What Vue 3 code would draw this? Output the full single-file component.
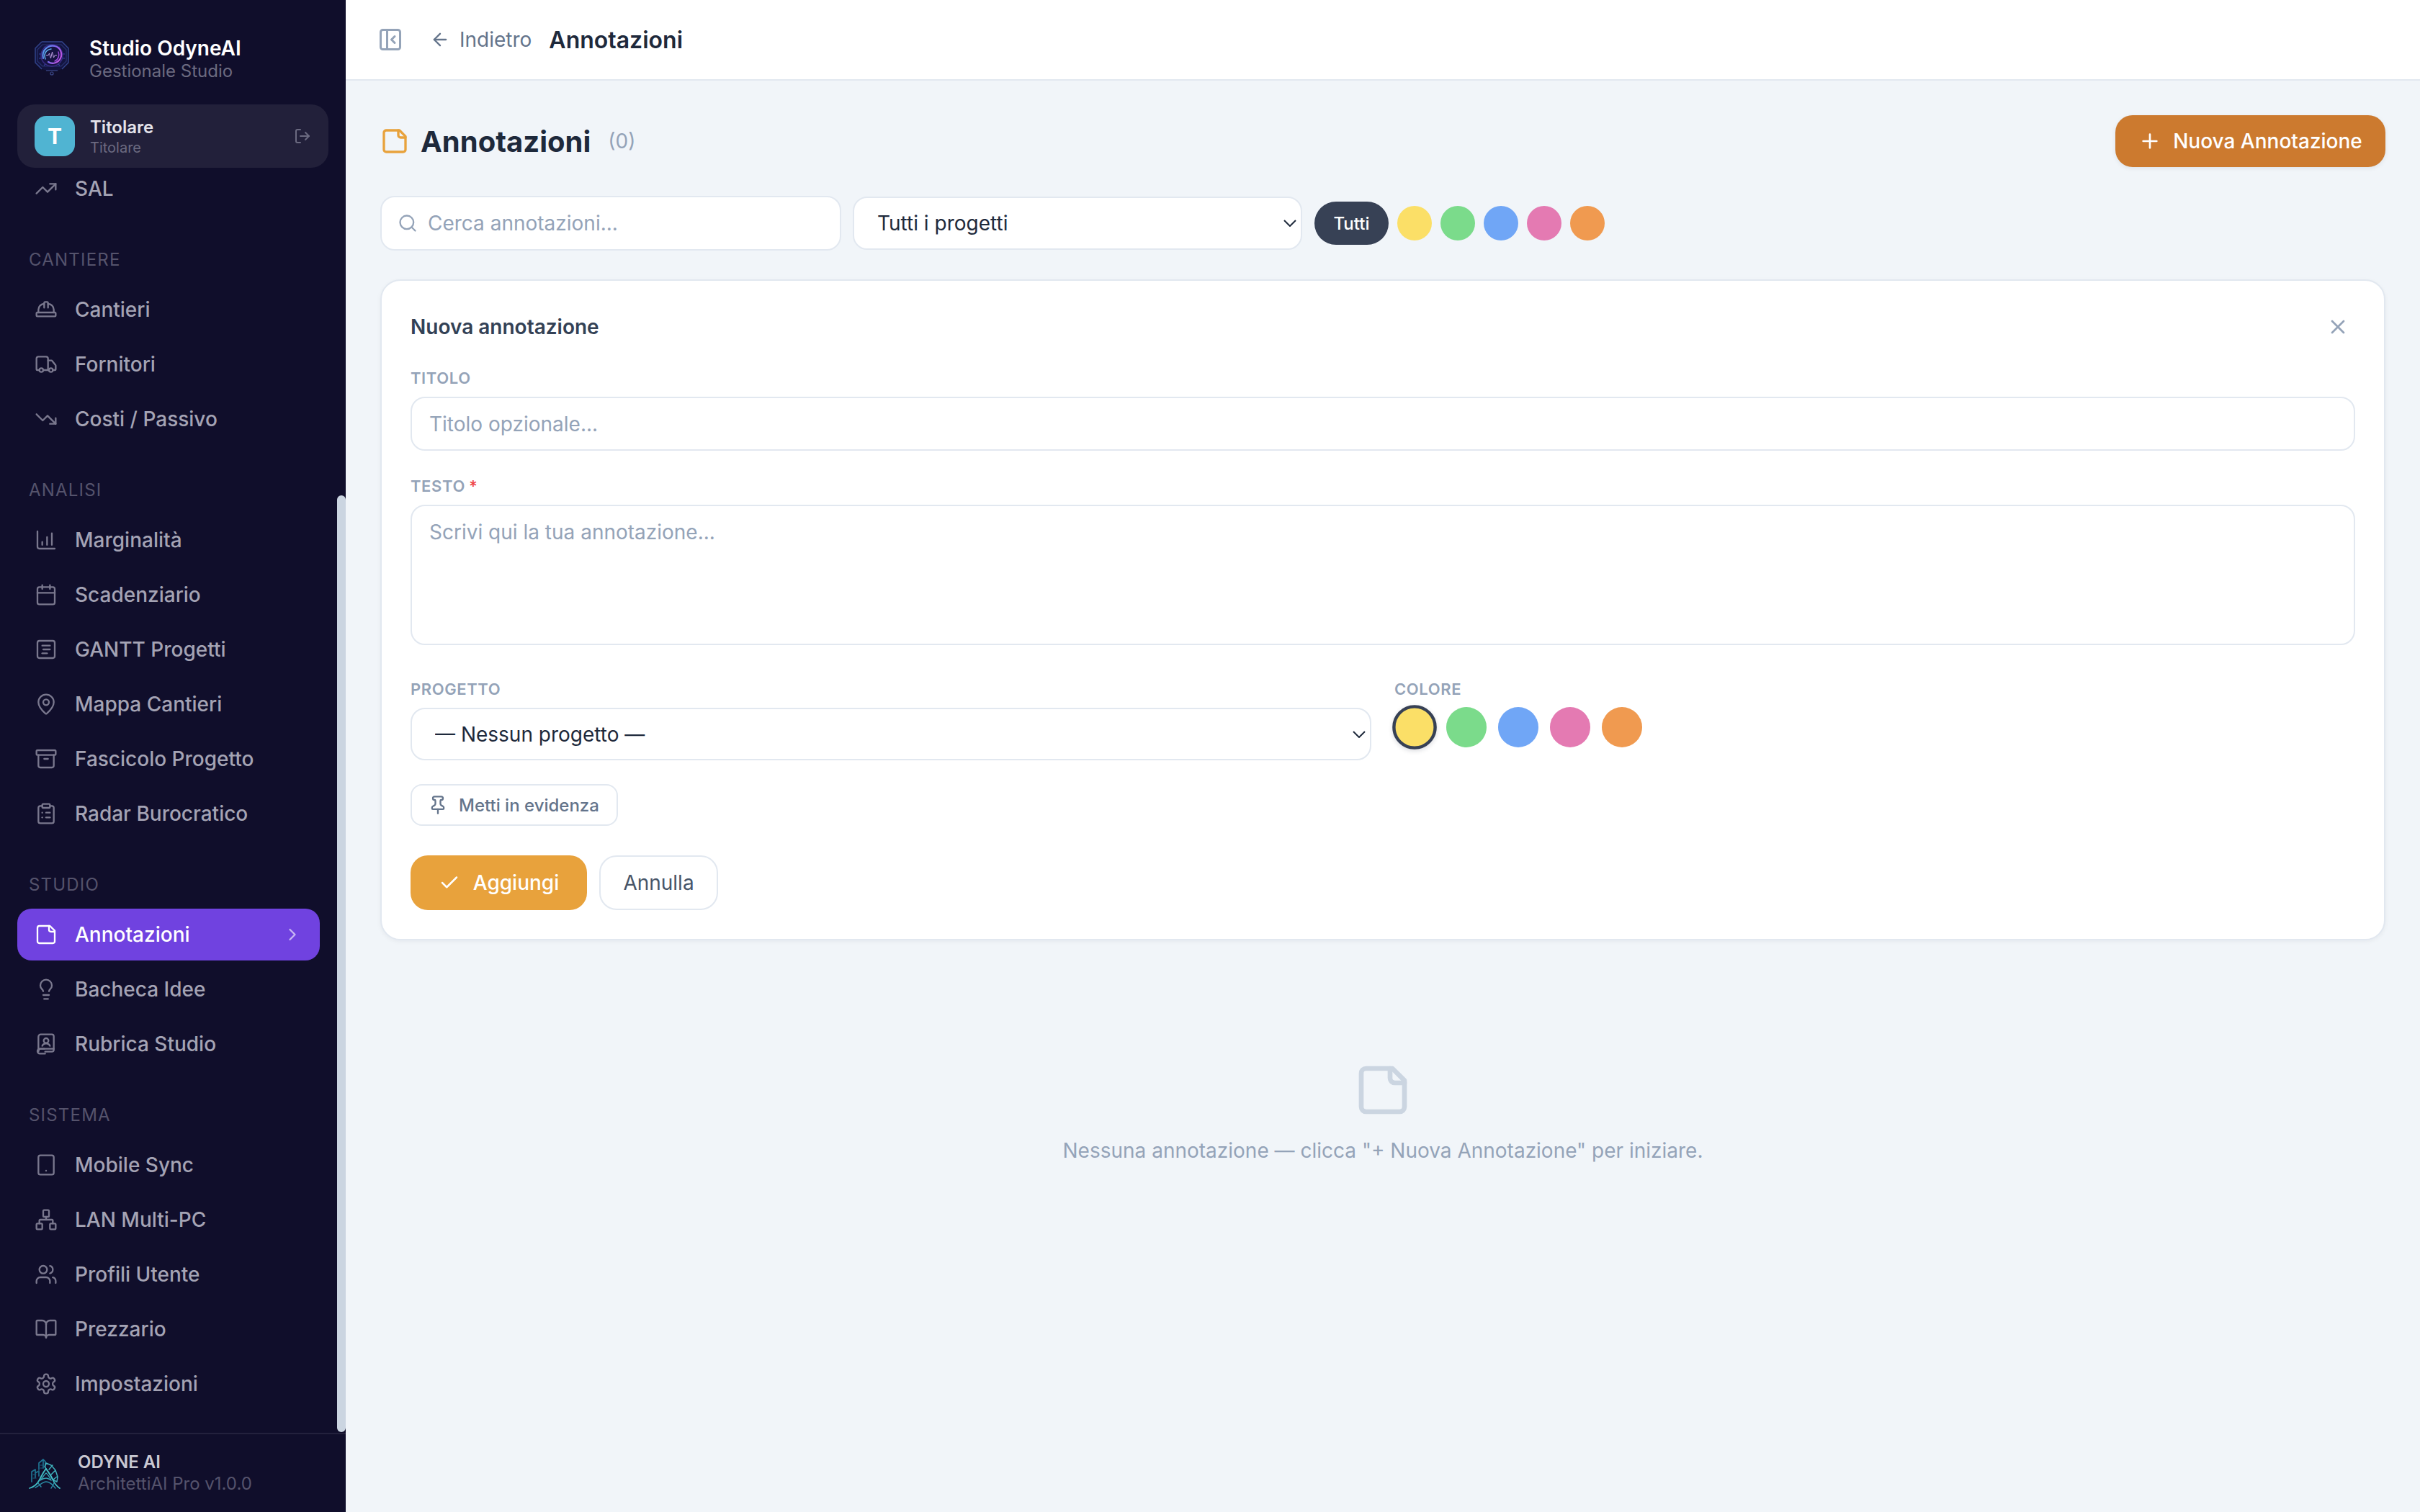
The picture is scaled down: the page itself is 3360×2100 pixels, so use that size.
<template>
  <div class="app">
    <aside class="sidebar">
      <div class="brand">
        <svg class="brand-logo" viewBox="0 0 48 48" fill="none">
          <defs>
            <linearGradient id="swirl" x1="0" y1="0" x2="1" y2="0.4">
              <stop offset="0" stop-color="#4aa3ee" />
              <stop offset="0.55" stop-color="#7a6cf0" />
              <stop offset="1" stop-color="#b856e4" />
            </linearGradient>
          </defs>
          <path d="M10 1h28l9 9v20l-9 9-7 2H17l-7-2-9-9V10z" fill="#131440" />
          <path d="M10 1h28l9 9v20l-9 9M10 39l-9-9V10l9-9" stroke="#33468f" stroke-width="1.4" />
          <path d="M11 5h26l7 7v16l-7 7H11l-7-7V12z" stroke="#28336f" stroke-width="1.2" />
          <path d="M6 18h3M6 24h3M39 18h3M39 24h3M13 8l3 3M35 8l-3 3M13 34l3-3M35 34l-3-3" stroke="#3546a0" stroke-width="1.2" />
          <circle cx="24" cy="20" r="15" fill="#161342" stroke="#3a2c86" stroke-width="1.4" />
          <path d="M12 24C9 13 19 5 28 7c8 2 11 10 8 17-3 6-11 9-17 5" stroke="url(#swirl)" stroke-width="2.2" stroke-linecap="round" />
          <path d="M15 25c-3-7 1-13 8-14" stroke="#5fb4ee" stroke-width="1.5" stroke-linecap="round" />
          <path d="M33 15c2 5 0 11-5 13" stroke="#9a48d8" stroke-width="1.5" stroke-linecap="round" />
          <path d="M16 20h3l1.500-3 2 7 2-9 2 8 1.500-3h3" stroke="#c9a8ee" stroke-width="0.9" stroke-linejoin="round" />
          <path d="M16 41h16" stroke="#3d4a8c" stroke-width="1.200" />
          <circle cx="24" cy="45" r="2" stroke="#3d4a8c" stroke-width="1.200" />
        </svg>
        <div class="brand-text">
          <div class="brand-name">Studio OdyneAI</div>
          <div class="brand-sub">Gestionale Studio</div>
        </div>
      </div>

      <div class="user-box">
        <div class="avatar">T</div>
        <div class="user-text">
          <div class="user-name">Titolare</div>
          <div class="user-role">Titolare</div>
        </div>
        <svg class="user-out" viewBox="0 0 24 24" fill="none" stroke="currentColor" stroke-width="2" stroke-linecap="round" stroke-linejoin="round">
          <path d="M9 21H5a2 2 0 0 1-2-2V5a2 2 0 0 1 2-2h4" />
          <path d="M16 17l5-5-5-5" />
          <path d="M21 12H9" />
        </svg>
      </div>

      <nav class="nav">
        <div v-for="group in groups" :key="group.title" class="nav-group">
          <div v-if="group.title" class="nav-label">{{ group.title }}</div>
          <div
            v-for="item in group.items"
            :key="item.label"
            class="nav-item"
            :class="{ active: item.active }"
          >
            <svg class="nav-icon" viewBox="0 0 24 24" fill="none" stroke="currentColor" stroke-width="1.75" stroke-linecap="round" stroke-linejoin="round">
              <path v-for="d in icons[item.icon]" :key="d" :d="d" />
            </svg>
            <span class="nav-text">{{ item.label }}</span>
            <svg v-if="item.active" class="nav-chevron" viewBox="0 0 24 24" fill="none" stroke="currentColor" stroke-width="2" stroke-linecap="round" stroke-linejoin="round">
              <path d="M9 18l6-6-6-6" />
            </svg>
          </div>
        </div>
        <div class="scrollbar"></div>
      </nav>

      <div class="side-foot">
        <svg class="foot-logo" viewBox="0 0 44 44" fill="none" stroke-linecap="round" stroke-linejoin="round">
          <path d="M4 34V20l5-3v11M9 22l5-3v7M14 17V8l6-5v12M20 3l3 3v7" stroke="#1f7391" stroke-width="1.700" />
          <path d="M6 24h4M6 29h4M11 20h3M16 11h3M16 15h3" stroke="#1b5f7d" stroke-width="1.200" />
          <path d="M24 8l7 3 6 7 3 9-1 7-6-3-5-9-6-9zM28 17l5-6M31 24l6-6M34 31l5-4" stroke="#3fb0bb" stroke-width="1.500" />
          <path d="M1 43c7-2 11-6 14-12 3-6 6-12 9-15 3 4 7 10 9 14 2 5 5 10 10 13" stroke="#42bcc4" stroke-width="1.800" />
          <path d="M16 32c3-3 5-8 8-10 3 2 5 6 7 10-3-2-5-3-7-3s-5 1-8 3z" stroke="#37a4b4" stroke-width="1.500" />
          <path d="M9 42c5-2 10-8 15-8s10 5 13 9M13 36l4 5M35 36l-4 7" stroke="#2a8ca5" stroke-width="1.500" />
        </svg>
        <div class="foot-text">
          <div class="foot-name">ODYNE AI</div>
          <div class="foot-sub">ArchitettiAI Pro v1.0.0</div>
        </div>
      </div>
    </aside>

    <div class="main">
      <header class="topbar">
        <svg class="collapse" viewBox="0 0 24 24" fill="none" stroke="currentColor" stroke-width="2" stroke-linecap="round" stroke-linejoin="round">
          <rect x="3" y="3" width="18" height="18" rx="2" />
          <path d="M9 3v18" />
          <path d="M16 15l-3-3 3-3" />
        </svg>
        <div class="back">
          <svg class="back-arrow" viewBox="0 0 24 24" fill="none" stroke="currentColor" stroke-width="2" stroke-linecap="round" stroke-linejoin="round">
            <path d="M12 19l-7-7 7-7" />
            <path d="M19 12H5" />
          </svg>
          <span>Indietro</span>
        </div>
        <div class="top-title">Annotazioni</div>
      </header>

      <main class="content">
        <div class="page-head">
          <div class="page-title">
            <svg class="title-icon" viewBox="0 0 24 24" fill="none" stroke="currentColor" stroke-width="2" stroke-linecap="round" stroke-linejoin="round">
              <path v-for="d in icons.note" :key="d" :d="d" />
            </svg>
            <h1>Annotazioni</h1>
            <span class="count">(0)</span>
          </div>
          <button class="btn-new">
            <svg viewBox="0 0 24 24" fill="none" stroke="currentColor" stroke-width="2" stroke-linecap="round">
              <path d="M5 12h14" />
              <path d="M12 5v14" />
            </svg>
            Nuova Annotazione
          </button>
        </div>

        <div class="filters">
          <div class="search">
            <svg viewBox="0 0 24 24" fill="none" stroke="currentColor" stroke-width="2" stroke-linecap="round">
              <circle cx="11" cy="11" r="8" />
              <path d="M21 21l-4.3-4.3" />
            </svg>
            <input type="text" placeholder="Cerca annotazioni..." />
          </div>
          <select class="filter-select">
            <option>Tutti i progetti</option>
          </select>
          <button class="pill">Tutti</button>
          <span v-for="c in colors" :key="c" class="dot" :style="{ background: c }"></span>
        </div>

        <section class="card">
          <div class="card-head">
            <h2>Nuova annotazione</h2>
            <svg class="close" viewBox="0 0 24 24" fill="none" stroke="currentColor" stroke-width="2" stroke-linecap="round">
              <path d="M18 6L6 18" />
              <path d="M6 6l12 12" />
            </svg>
          </div>

          <label class="field-label">Titolo</label>
          <input class="field" type="text" placeholder="Titolo opzionale..." />

          <label class="field-label second">Testo <span class="req">*</span></label>
          <textarea class="field area" placeholder="Scrivi qui la tua annotazione..."></textarea>

          <div class="row">
            <div>
              <label class="field-label">Progetto</label>
              <select class="field select">
                <option>— Nessun progetto —</option>
              </select>
            </div>
            <div>
              <label class="field-label">Colore</label>
              <div class="swatches">
                <span
                  v-for="(c, i) in colors"
                  :key="c"
                  class="swatch"
                  :class="{ selected: i === 0 }"
                  :style="{ background: c }"
                ></span>
              </div>
            </div>
          </div>

          <button class="pin">
            <svg viewBox="0 0 24 24" fill="none" stroke="currentColor" stroke-width="2" stroke-linecap="round" stroke-linejoin="round">
              <path d="M12 17v5" />
              <path d="M9 10.76a2 2 0 0 1-1.11 1.79l-1.78.9A2 2 0 0 0 5 15.24V16a1 1 0 0 0 1 1h12a1 1 0 0 0 1-1v-.76a2 2 0 0 0-1.11-1.79l-1.78-.9A2 2 0 0 1 15 10.76V7a1 1 0 0 1 1-1 2 2 0 0 0 0-4H8a2 2 0 0 0 0 4 1 1 0 0 1 1 1z" />
            </svg>
            Metti in evidenza
          </button>

          <div class="actions">
            <button class="btn-add">
              <svg viewBox="0 0 24 24" fill="none" stroke="currentColor" stroke-width="2" stroke-linecap="round" stroke-linejoin="round">
                <path d="M20 6L9 17l-5-5" />
              </svg>
              Aggiungi
            </button>
            <button class="btn-cancel">Annulla</button>
          </div>
        </section>

        <div class="empty">
          <svg viewBox="0 0 24 24" fill="none" stroke="currentColor" stroke-width="2" stroke-linecap="round" stroke-linejoin="round">
            <path v-for="d in icons.note" :key="d" :d="d" />
          </svg>
          <p>Nessuna annotazione — clicca "+ Nuova Annotazione" per iniziare.</p>
        </div>
      </main>
    </div>
  </div>
</template>

<script setup>
const colors = ['#fbdf67', '#7bdb8b', '#70a6f6', '#e47ab2', '#f09a50']

const icons = {
  trendUp: ['M22 7l-8.5 8.5-5-5L2 17', 'M16 7h6v6'],
  hardhat: [
    'M2 18a1 1 0 0 0 1 1h18a1 1 0 0 0 1-1v-2a1 1 0 0 0-1-1H3a1 1 0 0 0-1 1z',
    'M10 10V5a1 1 0 0 1 1-1h2a1 1 0 0 1 1 1v5',
    'M4 15v-3a6 6 0 0 1 6-6',
    'M14 6a6 6 0 0 1 6 6v3'
  ],
  truck: [
    'M14 18V6a2 2 0 0 0-2-2H4a2 2 0 0 0-2 2v11a1 1 0 0 0 1 1h2',
    'M15 18H9',
    'M19 18h2a1 1 0 0 0 1-1v-3.65a1 1 0 0 0-.22-.62l-3.48-4.35A1 1 0 0 0 17.52 8H14',
    'M17 20a2 2 0 1 0 0-4 2 2 0 0 0 0 4z',
    'M7 20a2 2 0 1 0 0-4 2 2 0 0 0 0 4z'
  ],
  trendDown: ['M22 17l-8.5-8.5-5 5L2 7', 'M16 17h6v-6'],
  chart: ['M3 3v16a2 2 0 0 0 2 2h16', 'M8 17v-3', 'M13 17V9', 'M18 17V5'],
  calendar: ['M8 2v4', 'M16 2v4', 'M5 4h14a2 2 0 0 1 2 2v14a2 2 0 0 1-2 2H5a2 2 0 0 1-2-2V6a2 2 0 0 1 2-2z', 'M3 10h18'],
  gantt: ['M5 3h14a2 2 0 0 1 2 2v14a2 2 0 0 1-2 2H5a2 2 0 0 1-2-2V5a2 2 0 0 1 2-2z', 'M8 8h8', 'M9 12h7', 'M8 16h5'],
  pin: [
    'M20 10c0 5-5.5 10.2-7.4 11.8a1 1 0 0 1-1.2 0C9.5 20.2 4 15 4 10a8 8 0 0 1 16 0',
    'M12 13a3 3 0 1 0 0-6 3 3 0 0 0 0 6z'
  ],
  archive: ['M3 3h18a1 1 0 0 1 1 1v3a1 1 0 0 1-1 1H3a1 1 0 0 1-1-1V4a1 1 0 0 1 1-1z', 'M4 8v11a2 2 0 0 0 2 2h12a2 2 0 0 0 2-2V8', 'M10 12h4'],
  clipboard: [
    'M9 2h6a1 1 0 0 1 1 1v2a1 1 0 0 1-1 1H9a1 1 0 0 1-1-1V3a1 1 0 0 1 1-1z',
    'M16 4h2a2 2 0 0 1 2 2v14a2 2 0 0 1-2 2H6a2 2 0 0 1-2-2V6a2 2 0 0 1 2-2h2',
    'M12 11h4', 'M12 16h4', 'M8 11h.01', 'M8 16h.01'
  ],
  note: ['M16 3H5a2 2 0 0 0-2 2v14a2 2 0 0 0 2 2h14a2 2 0 0 0 2-2V8Z', 'M15 3v4a2 2 0 0 0 2 2h4'],
  bulb: [
    'M15 14c.2-1 .7-1.7 1.5-2.5 1-.9 1.5-2.2 1.5-3.5A6 6 0 0 0 6 8c0 1 .2 2.2 1.5 3.5.7.7 1.3 1.5 1.5 2.5',
    'M9 18h6', 'M10 22h4'
  ],
  book: [
    'M11 22H5.5a1 1 0 0 1 0-5h4.5',
    'M4 19.5v-15A2.5 2.5 0 0 1 6.5 2H18a2 2 0 0 1 2 2v14a2 2 0 0 1-2 2h-7',
    'M4 19.5A2.5 2.5 0 0 1 6.5 17H20',
    'M12 11a2.5 2.5 0 1 0 0-5 2.5 2.5 0 0 0 0 5z',
    'M8 14c.5-1.5 2-2.5 4-2.5s3.500 1 4 2.500'
  ],
  tablet: ['M6 2h12a2 2 0 0 1 2 2v16a2 2 0 0 1-2 2H6a2 2 0 0 1-2-2V4a2 2 0 0 1 2-2z', 'M12 18h.01'],
  network: [
    'M10 2h4a1 1 0 0 1 1 1v5a1 1 0 0 1-1 1h-4a1 1 0 0 1-1-1V3a1 1 0 0 1 1-1z',
    'M3 16h4a1 1 0 0 1 1 1v4a1 1 0 0 1-1 1H3a1 1 0 0 1-1-1v-4a1 1 0 0 1 1-1z',
    'M17 16h4a1 1 0 0 1 1 1v4a1 1 0 0 1-1 1h-4a1 1 0 0 1-1-1v-4a1 1 0 0 1 1-1z',
    'M5 16v-3a1 1 0 0 1 1-1h12a1 1 0 0 1 1 1v3',
    'M12 12V9'
  ],
  users: [
    'M16 21v-2a4 4 0 0 0-4-4H6a4 4 0 0 0-4 4v2',
    'M9 11a4 4 0 1 0 0-8 4 4 0 0 0 0 8z',
    'M22 21v-2a4 4 0 0 0-3-3.870',
    'M16 3.130a4 4 0 0 1 0 7.750'
  ],
  open: [
    'M12 7v14',
    'M3 18a1 1 0 0 1-1-1V4a1 1 0 0 1 1-1h5a4 4 0 0 1 4 4 4 4 0 0 1 4-4h5a1 1 0 0 1 1 1v13a1 1 0 0 1-1 1h-6a3 3 0 0 0-3 3 3 3 0 0 0-3-3z'
  ],
  gear: [
    'M12.22 2h-.44a2 2 0 0 0-2 2v.18a2 2 0 0 1-1 1.730l-.43.250a2 2 0 0 1-2 0l-.15-.08a2 2 0 0 0-2.730.730l-.22.380a2 2 0 0 0 .730 2.730l.15.100a2 2 0 0 1 1 1.720v.510a2 2 0 0 1-1 1.740l-.15.090a2 2 0 0 0-.730 2.730l.22.380a2 2 0 0 0 2.730.730l.15-.08a2 2 0 0 1 2 0l.43.250a2 2 0 0 1 1 1.730V20a2 2 0 0 0 2 2h.44a2 2 0 0 0 2-2v-.18a2 2 0 0 1 1-1.730l.43-.250a2 2 0 0 1 2 0l.15.080a2 2 0 0 0 2.730-.730l.22-.390a2 2 0 0 0-.730-2.730l-.15-.080a2 2 0 0 1-1-1.740v-.500a2 2 0 0 1 1-1.740l.15-.090a2 2 0 0 0 .730-2.730l-.22-.380a2 2 0 0 0-2.730-.730l-.15.080a2 2 0 0 1-2 0l-.43-.250a2 2 0 0 1-1-1.730V4a2 2 0 0 0-2-2z',
    'M12 15a3 3 0 1 0 0-6 3 3 0 0 0 0 6z'
  ]
}

const groups = [
  { title: '', items: [{ label: 'SAL', icon: 'trendUp' }] },
  {
    title: 'Cantiere',
    items: [
      { label: 'Cantieri', icon: 'hardhat' },
      { label: 'Fornitori', icon: 'truck' },
      { label: 'Costi / Passivo', icon: 'trendDown' }
    ]
  },
  {
    title: 'Analisi',
    items: [
      { label: 'Marginalità', icon: 'chart' },
      { label: 'Scadenziario', icon: 'calendar' },
      { label: 'GANTT Progetti', icon: 'gantt' },
      { label: 'Mappa Cantieri', icon: 'pin' },
      { label: 'Fascicolo Progetto', icon: 'archive' },
      { label: 'Radar Burocratico', icon: 'clipboard' }
    ]
  },
  {
    title: 'Studio',
    items: [
      { label: 'Annotazioni', icon: 'note', active: true },
      { label: 'Bacheca Idee', icon: 'bulb' },
      { label: 'Rubrica Studio', icon: 'book' }
    ]
  },
  {
    title: 'Sistema',
    items: [
      { label: 'Mobile Sync', icon: 'tablet' },
      { label: 'LAN Multi-PC', icon: 'network' },
      { label: 'Profili Utente', icon: 'users' },
      { label: 'Prezzario', icon: 'open' },
      { label: 'Impostazioni', icon: 'gear' }
    ]
  }
]
</script>

<style>
html, body {
  margin: 0;
  background: #f1f5f9;
}
</style>

<style scoped>
* {
  box-sizing: border-box;
}

.app {
  display: flex;
  width: 3360px;
  height: 2100px;
  overflow: hidden;
  font-family: Inter, "Liberation Sans", sans-serif;
  color: #1e293b;
}

/* sidebar */
.sidebar {
  width: 480px;
  flex-shrink: 0;
  display: flex;
  flex-direction: column;
  background: #100e2b;
}

.brand {
  height: 145px;
  flex-shrink: 0;
  display: flex;
  align-items: center;
  gap: 28px;
  padding: 16px 0 0 48px;
}

.brand-logo {
  width: 48px;
  height: 48px;
}

.brand-name {
  font-size: 28px;
  line-height: 36px;
  font-weight: 600;
  color: #fff;
}

.brand-sub {
  font-size: 24px;
  line-height: 28px;
  color: #6b6a80;
}

.user-box {
  height: 88px;
  margin: 0 24px;
  flex-shrink: 0;
  display: flex;
  align-items: center;
  gap: 21px;
  padding: 0 24px;
  background: #22203a;
  border-radius: 24px;
}

.avatar {
  width: 56px;
  height: 56px;
  display: flex;
  align-items: center;
  justify-content: center;
  background: #50b4d2;
  border-radius: 16px;
  font-size: 30px;
  font-weight: 700;
  color: #fff;
}

.user-text {
  flex: 1;
}

.user-name {
  font-size: 24px;
  line-height: 32px;
  font-weight: 600;
  color: #e4e3ea;
}

.user-role {
  font-size: 20px;
  line-height: 24px;
  color: #6b6a80;
}

.user-out {
  width: 24px;
  height: 24px;
  color: #6b6a80;
}

.nav {
  position: relative;
  flex: 1;
  min-height: 0;
  overflow: hidden;
  padding: 0 36px 0 24px;
}

.scrollbar {
  position: absolute;
  top: 455px;
  right: 0;
  width: 12px;
  height: 1301px;
  background: #cbd5e1;
  border-radius: 6px;
}

.nav-group:first-of-type {
  margin-top: -7px;
}

.nav-label {
  height: 30px;
  margin: 48px 0 18px;
  padding-left: 16px;
  font-size: 24px;
  line-height: 30px;
  letter-spacing: 1.2px;
  text-transform: uppercase;
  color: #55536c;
}

.nav-item {
  height: 72px;
  margin-bottom: 4px;
  display: flex;
  align-items: center;
  gap: 24px;
  padding: 0 24px;
  border-radius: 20px;
  font-size: 28px;
  font-weight: 500;
  color: #a4a3b4;
}

.nav-icon {
  width: 32px;
  height: 32px;
  flex-shrink: 0;
  color: #7a788e;
}

.nav-text {
  flex: 1;
}

.nav-chevron {
  width: 28px;
  height: 28px;
  color: #c7b5f3;
}

.nav-item.active {
  background: #7042e0;
  color: #fff;
}

.nav-item.active .nav-icon {
  color: #fff;
}

.side-foot {
  height: 110px;
  flex-shrink: 0;
  display: flex;
  align-items: center;
  gap: 24px;
  padding: 0 0 0 40px;
  border-top: 2px solid #23213d;
}

.foot-logo {
  width: 44px;
  height: 44px;
}

.foot-name {
  font-size: 24px;
  line-height: 30px;
  font-weight: 600;
  color: #c9c8d2;
}

.foot-sub {
  font-size: 24px;
  line-height: 30px;
  color: #55536c;
}

/* main */
.main {
  flex: 1;
  min-width: 0;
  display: flex;
  flex-direction: column;
  background: #f1f5f9;
}

.topbar {
  height: 112px;
  flex-shrink: 0;
  display: flex;
  align-items: center;
  padding-left: 44px;
  background: #fff;
  border-bottom: 2px solid #e2e8f0;
}

.collapse {
  width: 36px;
  height: 36px;
  color: #94a3b8;
}

.back {
  display: flex;
  align-items: center;
  gap: 13px;
  margin-left: 37px;
  font-size: 28px;
  color: #64748b;
}

.back-arrow {
  width: 28px;
  height: 28px;
}

.top-title {
  margin-left: 24px;
  font-size: 32px;
  font-weight: 600;
  color: #1e293b;
}

.content {
  padding: 48px 48px 0;
}

.page-head {
  display: flex;
  align-items: center;
  justify-content: space-between;
  height: 72px;
}

.page-title {
  display: flex;
  align-items: center;
}

.title-icon {
  width: 40px;
  height: 40px;
  color: #e8a23c;
}

h1 {
  margin: 0 0 0 16px;
  font-size: 40px;
  font-weight: 700;
  color: #1e293b;
}

.count {
  margin-left: 24px;
  font-size: 28px;
  color: #94a3b8;
}

.btn-new {
  width: 375px;
  height: 72px;
  display: flex;
  align-items: center;
  justify-content: center;
  gap: 16px;
  border: 0;
  border-radius: 24px;
  background: #cc7a2f;
  box-shadow: 0 2px 6px rgba(15, 23, 42, 0.08);
  font-family: inherit;
  font-size: 28px;
  font-weight: 500;
  color: #fff;
}

.btn-new svg {
  width: 32px;
  height: 32px;
}

.filters {
  display: flex;
  align-items: center;
  margin-top: 40px;
  height: 76px;
}

.search {
  width: 640px;
  height: 76px;
  display: flex;
  align-items: center;
  gap: 14px;
  padding: 0 22px;
  background: #fff;
  border: 2px solid #e2e8f0;
  border-radius: 20px;
}

.search svg {
  width: 28px;
  height: 28px;
  flex-shrink: 0;
  color: #94a3b8;
}

.search input {
  flex: 1;
  min-width: 0;
  border: 0;
  outline: 0;
  padding: 0;
  background: none;
  font-family: inherit;
  font-size: 28px;
  color: #1e293b;
}

input::placeholder,
textarea::placeholder {
  color: #94a3b8;
  opacity: 1;
}

select {
  appearance: none;
  background: #fff url("data:image/svg+xml,%3Csvg xmlns='http://www.w3.org/2000/svg' width='18' height='10' fill='none' stroke='%231e293b' stroke-width='2'%3E%3Cpath d='M1 1l8 8 8-8'/%3E%3C/svg%3E") no-repeat right 6px center;
}

.filter-select {
  width: 624px;
  height: 74px;
  margin-left: 16px;
  padding: 0 32px;
  border: 2px solid #e2e8f0;
  border-radius: 20px;
  font-family: inherit;
  font-size: 28px;
  color: #1e293b;
}

.pill {
  width: 103px;
  height: 60px;
  margin: 0 12px 0 17px;
  border: 0;
  border-radius: 30px;
  background: #374155;
  font-family: inherit;
  font-size: 24px;
  font-weight: 500;
  color: #fff;
}

.dot {
  width: 48px;
  height: 48px;
  margin-right: 12px;
  border-radius: 50%;
}

.card {
  margin-top: 40px;
  height: 918px;
  padding: 40px;
  background: #fff;
  border: 2px solid #e2e8f0;
  border-radius: 28px;
  box-shadow: 0 2px 6px rgba(15, 23, 42, 0.05);
}

.card-head {
  display: flex;
  align-items: center;
  justify-content: space-between;
  height: 48px;
  margin-bottom: 33px;
  padding-right: 8px;
}

h2 {
  margin: 0;
  font-size: 28px;
  font-weight: 600;
  color: #334155;
}

.close {
  width: 32px;
  height: 32px;
  color: #94a3b8;
}

.field-label {
  display: block;
  height: 28px;
  margin-bottom: 12px;
  font-size: 22px;
  line-height: 28px;
  font-weight: 600;
  letter-spacing: 0.6px;
  text-transform: uppercase;
  color: #94a3b8;
}

.field-label.second {
  margin-top: 35px;
}

.req {
  margin-left: -1px;
  color: #ef4444;
}

.field {
  display: block;
  width: 100%;
  height: 75px;
  padding: 0 24px;
  background-color: #fff;
  border: 2px solid #e2e8f0;
  border-radius: 20px;
  outline: 0;
  font-family: inherit;
  font-size: 28px;
  color: #1e293b;
}

.area {
  height: 195px;
  padding: 18px 24px;
  resize: none;
  line-height: 36px;
}

.select {
  height: 73px;
  padding-left: 32px;
}

.row {
  display: grid;
  grid-template-columns: 1fr 1fr;
  gap: 32px;
  margin-top: 47px;
}

.swatches {
  display: flex;
  gap: 16px;
  margin-top: -1px;
}

.swatch {
  width: 56px;
  height: 56px;
  border-radius: 50%;
}

.swatch.selected {
  border: 4px solid #374155;
  transform: scale(1.1);
  box-shadow: 0 2px 6px rgba(15, 23, 42, 0.15);
}

.pin {
  display: flex;
  align-items: center;
  gap: 15px;
  width: 288px;
  height: 58px;
  margin-top: 33px;
  padding: 0 22px;
  background: #fff;
  border: 2px solid #e2e8f0;
  border-radius: 16px;
  font-family: inherit;
  font-size: 24px;
  font-weight: 500;
  white-space: nowrap;
  color: #64748b;
}

.pin svg {
  width: 28px;
  height: 28px;
  flex-shrink: 0;
  color: #64748b;
}

.actions {
  display: flex;
  gap: 17px;
  margin-top: 41px;
}

.btn-add {
  display: flex;
  align-items: center;
  justify-content: center;
  gap: 18px;
  width: 245px;
  height: 76px;
  border: 0;
  border-radius: 24px;
  background: #e8a23c;
  font-family: inherit;
  font-size: 28px;
  font-weight: 500;
  color: #fff;
}

.btn-add svg {
  width: 30px;
  height: 30px;
}

.btn-cancel {
  width: 165px;
  height: 76px;
  background: #fff;
  border: 2px solid #e2e8f0;
  border-radius: 24px;
  font-family: inherit;
  font-size: 28px;
  color: #475569;
}

.empty {
  display: flex;
  flex-direction: column;
  align-items: center;
  margin-top: 168px;
}

.empty svg {
  width: 80px;
  height: 80px;
  color: #cbd5e1;
}

.empty p {
  margin: 26px 0 0;
  font-size: 28px;
  line-height: 36px;
  color: #94a3b8;
}
</style>
